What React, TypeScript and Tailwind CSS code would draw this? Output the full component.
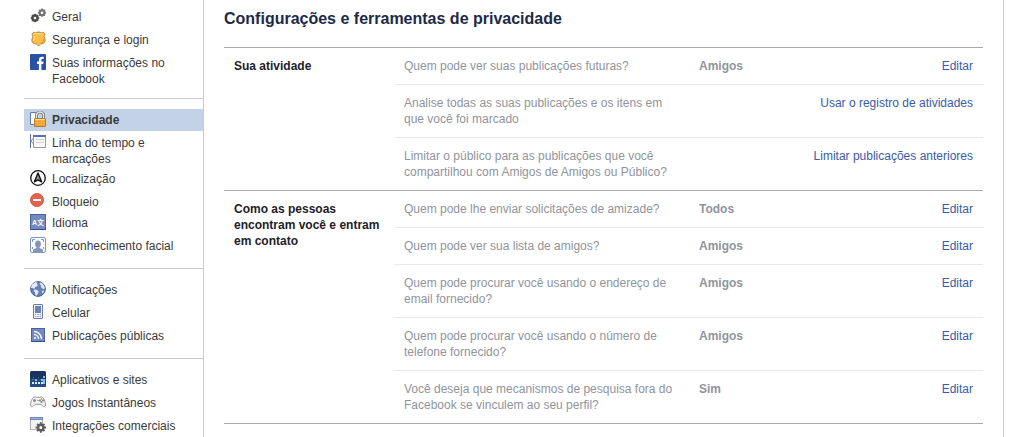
import type { ReactNode } from "react";

type NavItem = {
  key: string;
  label: string;
  icon: ReactNode;
  active?: boolean;
  pad?: string;
};

const NAV_GROUPS: NavItem[][] = [
  [
    {
      key: "general",
      label: "Geral",
      icon: (
        <>
          <circle cx="5" cy="10" r="2.5" fill="none" stroke="#4b4b4b" strokeWidth="2.4"/>
          <path d="M5 5.7V7.4M5 12.6v1.7M.7 10h1.8M7.5 10h1.8M2 7l1.2 1.2M6.8 11.8L8 13M2 13l1.2-1.2M6.8 8.2L8 7" stroke="#4b4b4b" strokeWidth="1.7"/>
          <circle cx="12" cy="4.7" r="2.4" fill="none" stroke="#747474" strokeWidth="2.2"/>
          <path d="M12 .6v1.6M12 7.2v1.6M7.9 4.7h1.6M14.5 4.7H16M9.1 1.8l1.1 1.1M13.8 6.5l1.1 1.1M9.1 7.6l1.1-1.1M13.8 2.9l1.1-1.1" stroke="#747474" strokeWidth="1.6"/>
        </>
      ),
    },
    {
      key: "security",
      label: "Segurança e login",
      icon: (
        <>
          <path d="M3.7 1.2c1.4.8 2.4.6 3.3-.1h3c.9.7 1.900.9 3.300.1l1.700 2.100c-1 1.300-.9 2.300-.4 3.500.9 2.200.7 4-.6 5.100-1 .9-2.400.9-3.500 1.300-.8.3-1.300 1.200-2 1.800-.7-.6-1.200-1.500-2-1.800-1.100-.4-2.500-.4-3.500-1.300-1.300-1.100-1.500-2.900-.6-5.100.5-1.200.5-2.200-.5-3.500z" fill="#f8bd4a" stroke="#bb7d28" strokeWidth=".9"/>
          <path d="M3.6 2.800h9.500M3.700 10c-.2-1.500.9-2.500.6-5" stroke="#ffe09a" strokeWidth="1" fill="none"/>
          <path d="M13.300 8c.6 2.300-.4 3.600-2 4.100" stroke="#e59e30" strokeWidth="1.200" fill="none"/>
        </>
      ),
    },
    {
      key: "info",
      label: "Suas informações no Facebook",
      pad: "pb-0",
      icon: (
        <>
          <rect width="16" height="16" rx="1" fill="#2850a3"/>
          <path d="M8.9 16v-6H7V7.600h1.900V6C8.900 3.900 10.200 2.800 12 2.800c.8 0 1.500.1 1.700.1V5h-1.100c-1 0-1.200.5-1.200 1.200v1.400h2.200l-.3 2.400h-1.900v6z" fill="#fff"/>
        </>
      ),
    },
  ],
  [
    {
      key: "privacy",
      label: "Privacidade",
      active: true,
      icon: (
        <>
          <path d="M.5 1.500h6v12h-6z" fill="#fff" stroke="#5f7bb8"/>
          <path d="M6.500 8V4.500a3.500 3.500 0 017 0V8" fill="none" stroke="#777" strokeWidth="3"/>
          <path d="M6.500 8V4.500a3.500 3.500 0 017 0V8" fill="none" stroke="#e4e4e4" strokeWidth="1.300"/>
          <rect x="4.500" y="7.500" width="11" height="8" rx=".5" fill="#f7b14a" stroke="#bd7a27"/>
          <path d="M5 8.500h10" stroke="#ffdc9c"/>
          <path d="M5 10.500h10M5 12.500h10M5 14.500h10" stroke="#ec9f34"/>
        </>
      ),
    },
    {
      key: "timeline",
      label: "Linha do tempo e marcações",
      pad: "pb-0",
      icon: (
        <>
          <path d="M.5 0v14" stroke="#5872ad"/>
          <path d="M3.800 3.500L1 7l2.800 3.500" fill="none" stroke="#8a8f99"/>
          <path d="M3.500 1v12.500h12V1" fill="#fafafa" stroke="#999"/>
          <path d="M3 2h13" stroke="#5872ad" strokeWidth="2"/>
          <path d="M6 5.500h8M6 8.500h8" stroke="#cfcfcf"/>
        </>
      ),
    },
    {
      key: "location",
      label: "Localização",
      icon: (
        <>
          <circle cx="8" cy="8" r="7.300" fill="#fff" stroke="#111" strokeWidth="1.300"/>
          <path d="M8 3l3.600 8.800L8 9.800l-3.600 2z" fill="#999" stroke="#111" strokeWidth="1.400" strokeLinejoin="round"/>
        </>
      ),
    },
    {
      key: "blocking",
      label: "Bloqueio",
      pad: "pb-px",
      icon: (
        <>
          <circle cx="7" cy="7" r="6.600" fill="#e3634c" stroke="#cf5744" strokeWidth=".8"/>
          <path d="M3 7h8" stroke="#fff" strokeWidth="2"/>
        </>
      ),
    },
    {
      key: "language",
      label: "Idioma",
      icon: (
        <>
          <rect x=".5" y=".5" width="15" height="15" fill="#7489bf" stroke="#4a63a2"/>
          <path d="M0 15.500h16" stroke="#354f91"/>
          <text x="2" y="11" fill="#fff" fontSize="7" fontWeight="700" fontFamily="Liberation Sans, sans-serif">A</text>
          <text x="7" y="11" fill="#fff" fontSize="7" fontWeight="700" fontFamily="Noto Sans CJK SC, sans-serif">文</text>
        </>
      ),
    },
    {
      key: "face",
      label: "Reconhecimento facial",
      icon: (
        <>
          <rect x=".5" y=".5" width="15" height="15" rx="1.500" fill="#fff" stroke="#8295bd"/>
          <path d="M2.500 5V2.500H5M11 2.500h2.500V5M2.500 10v2M13.500 10v2" fill="none" stroke="#8295bd"/>
          <ellipse cx="8" cy="7" rx="2.900" ry="3.500" fill="#8295bd"/>
          <path d="M6.500 9h3v2l3.500 1.500V15H3v-2.500L6.500 11z" fill="#8295bd"/>
        </>
      ),
    },
  ],
  [
    {
      key: "notifications",
      label: "Notificações",
      icon: (
        <>
          <circle cx="8" cy="8" r="7.400" fill="#6780b8" stroke="#4a639e" strokeWidth="1"/>
          <path d="M2 3.500L5.500 1l2 .7-.8 1.300L8 4 6.800 5.500 5.200 6 4.300 8l-2-1.300L1 7c0-1.300.4-2.500 1-3.500z" fill="#e6ebf5"/>
          <path d="M4.500 8.500l2.200.3 2 1.700-.8 2-1.400 2.300-1.200-.8-.3-2.500-1.200-1.400z" fill="#e6ebf5"/>
          <path d="M10 1.500l2.500 1L14 4.700l1 2.300-1.300 1.200L12 7l-1.300-1 .6-1.500-1.600-1z" fill="#dfe6f2"/>
          <path d="M12.500 9.500l1.700.2-1.500 2.800-.9-1z" fill="#dfe6f2"/>
        </>
      ),
    },
    {
      key: "mobile",
      label: "Celular",
      icon: (
        <>
          <rect x="3.500" y=".5" width="9" height="14" rx=".5" fill="#f0f2f7" stroke="#6a7ba6"/>
          <path d="M5 2h6v7H5z" fill="#6982b9"/>
          <path d="M5 10.500h6M5 12.500h6" stroke="#8f9dbd" strokeDasharray="1 .67"/>
        </>
      ),
    },
    {
      key: "public",
      label: "Publicações públicas",
      icon: (
        <>
          <rect x="1.500" y="1.500" width="13" height="13" fill="#7489bf" stroke="#4a63a2"/>
          <path d="M1 14.500h14" stroke="#354f91"/>
          <circle cx="5" cy="11" r="1.100" fill="#fff"/>
          <path d="M4 7.500a4.500 4.500 0 014.500 4.500M4 4.500a7.500 7.500 0 017.500 7.500" fill="none" stroke="#f2f4fa" strokeWidth="1.400"/>
        </>
      ),
    },
  ],
  [
    {
      key: "apps",
      label: "Aplicativos e sites",
      icon: (
        <>
          <rect width="16" height="16" rx="1.500" fill="#19345f"/>
          <path d="M0 8h16v6.500a1.500 1.500 0 01-1.500 1.500h-13A1.500 1.500 0 010 14.500z" fill="#254a80"/>
          <path d="M2 11h2v2H2zM5 11h2v2H5zM8 11h2v2H8zM11 11h2v2h-2z" fill="#d9efff"/>
          <path d="M5 8h2v2H5zM11 8h2v2h-2zM13 5h2v2h-2zM13 8h2v5h-2z" fill="#7cc0e8"/>
          <path d="M2 8h2v1H2zM8 6h1v1H8zM10 8h1v1h-1zM3 6h1v1H3z" fill="#4782b4"/>
        </>
      ),
    },
    {
      key: "games",
      label: "Jogos Instantâneos",
      icon: (
        <>
          <path d="M3.500 3.300c1-.7 2-.5 2.700 0h3.600c.7-.5 1.700-.7 2.700 0 1.700 1.200 3 5.300 3 7.700 0 1.800-1.700 2.200-2.700 1.200L11 10.300H5l-1.800 1.900C2.200 13.200.5 12.800.5 11c0-2.400 1.300-6.500 3-7.700z" fill="#f3f3f3" stroke="#959595"/>
          <circle cx="4.500" cy="6.500" r="1.500" fill="#8a8a8a"/>
          <path d="M7 6.500h2" stroke="#aaa"/>
          <circle cx="11.500" cy="5" r=".9" fill="#e0aa2d"/>
          <circle cx="10" cy="6.500" r=".9" fill="#477cc2"/>
          <circle cx="13" cy="6.500" r=".9" fill="#d24b40"/>
          <circle cx="11.500" cy="8" r=".9" fill="#4ca456"/>
        </>
      ),
    },
    {
      key: "business",
      label: "Integrações comerciais",
      icon: (
        <>
          <rect x=".5" y=".5" width="12" height="12" fill="#f2f2f2" stroke="#b0b0b0"/>
          <path d="M0 1.500h13" stroke="#6f88bd" strokeWidth="3"/>
          <path d="M1 1.500h11" stroke="#9aafda"/>
          <circle cx="10.800" cy="10.500" r="2.700" fill="#fff" stroke="#5e5e5e" strokeWidth="2.400"/>
          <path d="M10.800 5.300v2M10.800 13.700v2M5.600 10.500h2M14 10.500h2M7.100 6.800l1.500 1.500M13 12.700l1.500 1.500M7.100 14.200l1.500-1.500M13 8.300l1.500-1.500" stroke="#5e5e5e" strokeWidth="1.800"/>
        </>
      ),
    },
  ],
];

type Setting = { question: string; value?: string; action: string };

const SECTIONS: { title: string; rows: Setting[] }[] = [
  {
    title: "Sua atividade",
    rows: [
      { question: "Quem pode ver suas publicações futuras?", value: "Amigos", action: "Editar" },
      { question: "Analise todas as suas publicações e os itens em que você foi marcado", action: "Usar o registro de atividades" },
      { question: "Limitar o público para as publicações que você compartilhou com Amigos de Amigos ou Público?", action: "Limitar publicações anteriores" },
    ],
  },
  {
    title: "Como as pessoas encontram você e entram em contato",
    rows: [
      { question: "Quem pode lhe enviar solicitações de amizade?", value: "Todos", action: "Editar" },
      { question: "Quem pode ver sua lista de amigos?", value: "Amigos", action: "Editar" },
      { question: "Quem pode procurar você usando o endereço de email fornecido?", value: "Amigos", action: "Editar" },
      { question: "Quem pode procurar você usando o número de telefone fornecido?", value: "Amigos", action: "Editar" },
      { question: "Você deseja que mecanismos de pesquisa fora do Facebook se vinculem ao seu perfil?", value: "Sim", action: "Editar" },
    ],
  },
];

function Sidebar() {
  return (
    <nav className="w-[204px] shrink-0 border-r border-[#ccc] pl-6 pt-1.5">
      {NAV_GROUPS.map((group, i) => (
        <ul
          key={group[0].key}
          className={`flex flex-col gap-px ${i > 0 ? "mt-[11px] border-t border-[#ccc] pt-2.5" : ""}`}
        >
          {group.map((item) => (
            <li key={item.key}>
              <a
                href={`#${item.key}`}
                aria-current={item.active ? "page" : undefined}
                className={`flex items-start gap-1.5 pl-1.5 pr-4 pt-[3px] ${item.pad ?? "pb-[3px]"} ${
                  item.active ? "bg-[#c4d2e7] font-bold" : "hover:bg-[#eff2f7]"
                }`}
              >
                <svg width="16" height="16" viewBox="0 0 16 16" fill="none" aria-hidden="true" className="-mt-px shrink-0">
                  {item.icon}
                </svg>
                <span>{item.label}</span>
              </a>
            </li>
          ))}
        </ul>
      ))}
    </nav>
  );
}

function SettingsTable() {
  return (
    <table className="w-full border-separate border-spacing-0 border-b border-[#aaa] text-left">
      {SECTIONS.map((section) => (
        <tbody key={section.title}>
          {section.rows.map((row, i) => {
            const cell = `border-t p-2.5 align-top ${i === 0 ? "border-[#aaa]" : "border-[#e9e9e9]"}`;
            return (
              <tr key={row.question}>
                {i === 0 && (
                  <th
                    scope="rowgroup"
                    rowSpan={section.rows.length}
                    className="w-[170px] border-t border-[#aaa] p-2.5 align-top font-bold text-[#1d2129]"
                  >
                    {section.title}
                  </th>
                )}
                <td className={`${cell} w-[295px] text-[#90949c]`}>{row.question}</td>
                {row.value && <td className={`${cell} font-bold text-[#90949c]`}>{row.value}</td>}
                <td colSpan={row.value ? 1 : 2} className={`${cell} whitespace-nowrap text-right`}>
                  <a href="#edit" className="text-[#3b5ba5] hover:underline">
                    {row.action}
                  </a>
                </td>
              </tr>
            );
          })}
        </tbody>
      ))}
    </table>
  );
}

export default function App() {
  return (
    <div className="flex min-h-screen bg-white pr-2.5 font-['Liberation_Sans',Arial,sans-serif] text-[12px] leading-4 text-[#3a3a3a]">
      <Sidebar />
      <main className="min-w-0 flex-1 border-r border-[#ccc] px-5 pt-2">
        <h1 className="mb-[17px] text-base leading-[22px] font-bold text-[#1d2a47]">
          Configurações e ferramentas de privacidade
        </h1>
        <SettingsTable />
      </main>
    </div>
  );
}
